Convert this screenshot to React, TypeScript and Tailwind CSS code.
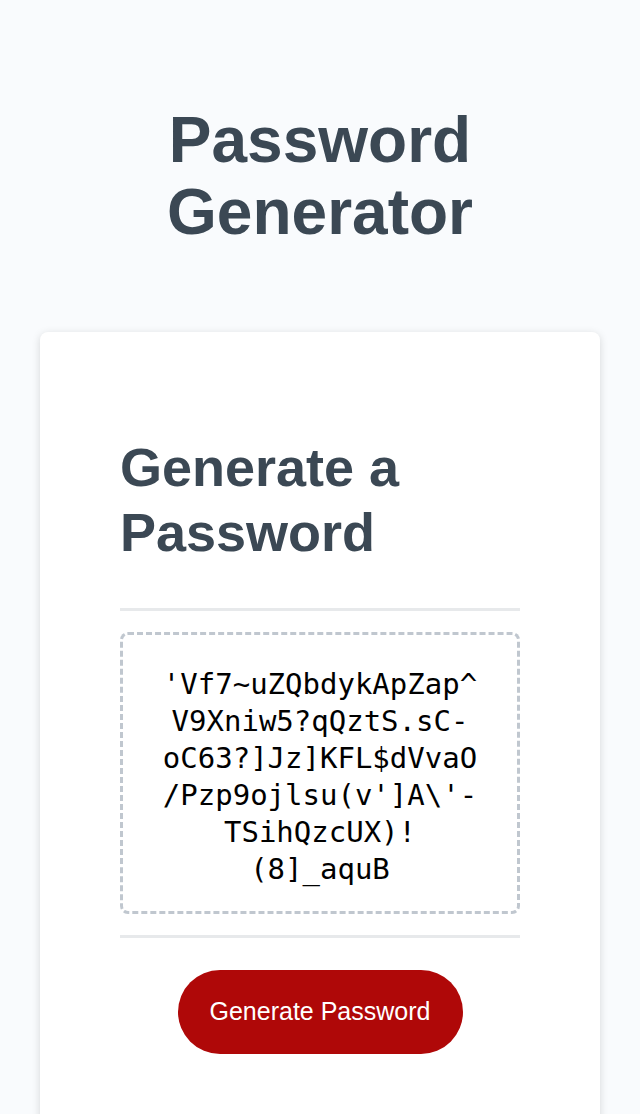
const lines = [
  "'Vf7~uZQbdykApZap^",
  "V9Xniw5?qQztS.sC-",
  "oC63?]Jz]KFL$dVvaO",
  "/Pzp9ojlsu(v']A\\'-",
  "TSihQzcUX)!",
  "(8]_aquB",
];

export default function App() {
  return (
    <div className="min-h-screen bg-[#f9fbfd] font-['Liberation_Sans',Arial,sans-serif] text-[#3b4854]">
      <div className="px-[40px] pt-[104px]">
        {/* Header */}
        <header className="mb-[84px] text-center">
          <h1 className="text-[64px] font-bold leading-[72px]">
            Password
            <br />
            Generator
          </h1>
        </header>

        {/* Card */}
        <div className="rounded-lg bg-white px-[80px] pt-[103px] pb-[80px] shadow-[0_2px_8px_0_rgba(0,0,0,0.15)]">
          <h2 className="mb-[43px] text-[54px] font-bold leading-[65px]">
            Generate a
            <br />
            Password
          </h2>
          <div className="h-[3px] w-full bg-[#e7e9eb]" />

          <div className="my-[21px] h-[282px] rounded-[8px] border-[3px] border-dashed border-[#c0c7cf] pt-[31px] text-center font-['DejaVu_Sans_Mono',monospace] text-[29px] leading-[37px] text-black">
            {lines.map((l, i) => (
              <div key={i}>{l}</div>
            ))}
          </div>

          <div className="h-[3px] w-full bg-[#e7e9eb]" />

          <div className="mt-[32px] text-center">
            <button className="h-[84px] w-[285px] rounded-full bg-[#af0808] text-[25px] text-white">
              Generate Password
            </button>
          </div>
        </div>
      </div>
    </div>
  );
}
